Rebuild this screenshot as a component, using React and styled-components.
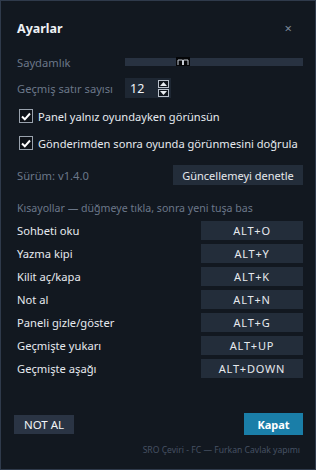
import React, { useState } from "react";
import styled, { createGlobalStyle } from "styled-components";

const GlobalStyle = createGlobalStyle`
  html, body {
    margin: 0;
    padding: 0;
    background: #121820;
  }
  * {
    box-sizing: border-box;
  }
`;

const Window = styled.div`
  width: 316px;
  height: 470px;
  border: 1px solid #2f3a4b;
  background: #121820;
  padding: 16px 12px 0 16px;
  display: flex;
  flex-direction: column;
  font-family: "Noto Sans", "Open Sans", sans-serif;
  font-size: 11px;
  color: #e3e7ec;
`;

const Header = styled.div`
  height: 22px;
  display: flex;
  align-items: center;
  justify-content: space-between;
`;

const Title = styled.h1`
  margin: 0;
  font-size: 12.5px;
  font-weight: 700;
  color: #eef1f5;
`;

const CloseButton = styled.button`
  border: none;
  background: none;
  padding: 0;
  margin-right: 11px;
  color: #7d8899;
  font-size: 13px;
  font-family: inherit;
  line-height: 1;
  cursor: pointer;
`;

const Row = styled.div`
  height: ${(p) => p.$h || 20}px;
  margin-top: ${(p) => p.$mt}px;
  display: flex;
  align-items: center;
  justify-content: ${(p) => (p.$spread ? "space-between" : "flex-start")};
  white-space: nowrap;
`;

const Label = styled.span`
  width: ${(p) => (p.$w ? `${p.$w}px` : "auto")};
  flex-shrink: 0;
  color: #6b7789;
  font-size: ${(p) => p.$size || 11.2}px;
`;

const Track = styled.div`
  position: relative;
  flex: 1;
  height: 8px;
  background: #283241;
`;

const Thumb = styled.div`
  position: absolute;
  top: -1px;
  left: ${(p) => p.$pos}%;
  width: 14px;
  height: 9px;
  background: #050608;
  display: flex;
  align-items: center;
  justify-content: center;
`;

const SpinBox = styled.div`
  width: 46px;
  height: 20px;
  background: #1e2733;
  display: flex;
  align-items: center;
  justify-content: space-between;
  padding: 0 2px 0 5px;
  color: #f1f4f8;
  font-size: 12.5px;
`;

const Arrows = styled.div`
  display: flex;
  flex-direction: column;
  gap: 1px;
`;

const ArrowBox = styled.div`
  width: 11px;
  height: 8px;
  background: #0f141b;
  border: 1px solid #b9c0ca;
  display: flex;
  align-items: center;
  justify-content: center;
`;

const CheckRow = styled.label`
  height: 20px;
  margin-top: ${(p) => p.$mt}px;
  padding-left: 2px;
  display: flex;
  align-items: center;
  gap: 5px;
  color: #e6eaef;
  font-size: 11.1px;
  white-space: nowrap;
  cursor: pointer;
`;

const CheckBox = styled.span`
  width: 14px;
  height: 14px;
  border: 1px solid #9aa3ae;
  background: #0e1218;
  display: flex;
  align-items: center;
  justify-content: center;
  flex-shrink: 0;
`;

const Button = styled.button`
  height: ${(p) => p.$h || 19}px;
  width: ${(p) => (p.$w ? `${p.$w}px` : "auto")};
  padding: 0;
  border: none;
  background: ${(p) => p.$bg || "#232d3a"};
  color: ${(p) => p.$color || "#e6e9ee"};
  font-family: inherit;
  font-size: ${(p) => p.$size || 11}px;
  font-weight: ${(p) => (p.$bold ? 700 : 400)};
  letter-spacing: ${(p) => p.$ls || 0}px;
  white-space: nowrap;
  cursor: pointer;
`;

const ShortcutList = styled.div`
  margin-top: 3px;
  display: flex;
  flex-direction: column;
  gap: 4px;
`;

const ShortcutRow = styled.div`
  height: 19px;
  display: flex;
  align-items: center;
  justify-content: space-between;
  font-size: 11.2px;
  color: #e6eaef;
`;

const Footer = styled.div`
  margin-top: 9px;
  height: 14px;
  padding-right: 3px;
  text-align: right;
  font-size: 8.6px;
  color: #465163;
  white-space: nowrap;
`;

const shortcuts = [
  ["Sohbeti oku", "ALT+O"],
  ["Yazma kipi", "ALT+Y"],
  ["Kilit aç/kapa", "ALT+K"],
  ["Not al", "ALT+N"],
  ["Paneli gizle/göster", "ALT+G"],
  ["Geçmişte yukarı", "ALT+UP"],
  ["Geçmişte aşağı", "ALT+DOWN"],
];

const Check = () => (
  <svg width="10" height="9" viewBox="0 0 10 9">
    <path d="M1 4.5 L3.8 7.3 L9 1.5" fill="none" stroke="#ffffff" strokeWidth="2" />
  </svg>
);

const Tri = ({ up }) => (
  <svg width="7" height="4" viewBox="0 0 7 4">
    <path d={up ? "M0 4 L3.5 0 L7 4 Z" : "M0 0 L3.5 4 L7 0 Z"} fill="#e8ecf0" />
  </svg>
);

const App = () => {
  const [opts, setOpts] = useState({ panel: true, verify: true });
  const toggle = (k) => setOpts((o) => ({ ...o, [k]: !o[k] }));

  return (
    <>
      <GlobalStyle />
      <Window>
        <Header>
          <Title>Ayarlar</Title>
          <CloseButton>×</CloseButton>
        </Header>

        <Row $mt={13}>
          <Label $w={108}>Saydamlık</Label>
          <Track>
            <Thumb $pos={28.5}>
              <svg width="12" height="6" viewBox="0 0 12 6">
                <path d="M1 6 V1 H5.5 V6 M6.5 6 V1 H11 V6" fill="none" stroke="#c9ced6" strokeWidth="1" />
              </svg>
            </Thumb>
          </Track>
        </Row>

        <Row $mt={6}>
          <Label $w={108}>Geçmiş satır sayısı</Label>
          <SpinBox>
            <span>12</span>
            <Arrows>
              <ArrowBox>
                <Tri up />
              </ArrowBox>
              <ArrowBox>
                <Tri />
              </ArrowBox>
            </Arrows>
          </SpinBox>
        </Row>

        <CheckRow $mt={8} onClick={() => toggle("panel")}>
          <CheckBox>{opts.panel && <Check />}</CheckBox>
          Panel yalnız oyundayken görünsün
        </CheckRow>

        <CheckRow $mt={7} onClick={() => toggle("verify")}>
          <CheckBox>{opts.verify && <Check />}</CheckBox>
          Gönderimden sonra oyunda görünmesini doğrula
        </CheckRow>

        <Row $mt={12} $spread>
          <Label>Sürüm: v1.4.0</Label>
          <Button $h={20} $w={130}>Güncellemeyi denetle</Button>
        </Row>

        <Row $mt={13}>
          <Label $size={10.6}>Kısayollar — düğmeye tıkla, sonra yeni tuşa bas</Label>
        </Row>

        <ShortcutList>
          {shortcuts.map(([name, key]) => (
            <ShortcutRow key={name}>
              <span>{name}</span>
              <Button $w={102} $size={11} $ls={0.8}>
                {key}
              </Button>
            </ShortcutRow>
          ))}
        </ShortcutList>

        <Row $mt={35} $h={22} $spread>
          <Button $h={19} $w={60} $bg="#2a3444" $color="#f2f4f7" $size={11.5} style={{ marginLeft: -3 }}>
            NOT AL
          </Button>
          <Button $h={22} $w={59} $bg="#1a7ea8" $color="#ffffff" $bold $size={11}>
            Kapat
          </Button>
        </Row>

        <Footer>SRO Çeviri - FC — Furkan Cavlak yapımı</Footer>
      </Window>
    </>
  );
};

export default App;
